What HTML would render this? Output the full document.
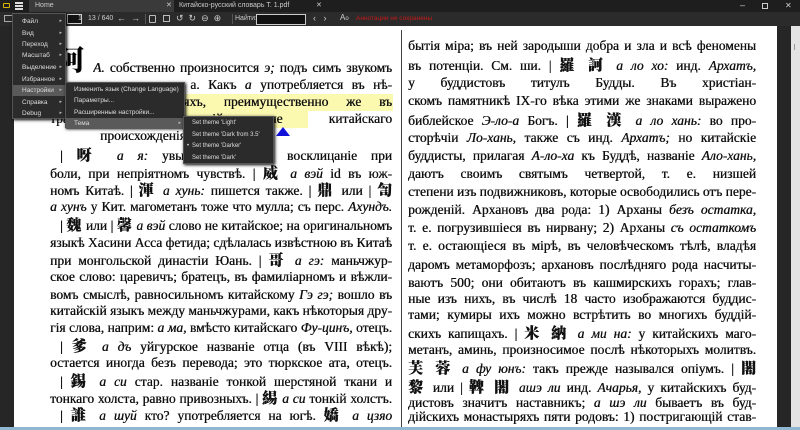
<!DOCTYPE html>
<html><head><meta charset="utf-8"><style>
*{margin:0;padding:0;box-sizing:border-box}
body{width:800px;height:430px;overflow:hidden;background:#262626;position:relative;font-family:"Liberation Sans",sans-serif}
.a{position:absolute}
#tabs{left:0;top:0;width:800px;height:12px;background:#1e1e1e}
#tb{left:0;top:12px;width:800px;height:14px;background:#2b2b2b}
.ui{color:#ccc;font-size:7px;line-height:10px;white-space:nowrap}
#page{left:14px;top:26px;width:763px;height:401px;background:#fff}
.l{position:absolute;font-family:"Liberation Serif","Noto Serif CJK SC",serif;font-size:13.5px;line-height:18px;height:18px;color:#111;text-shadow:0.35px 0 0 #111;text-align:justify;text-align-last:justify;overflow:hidden;white-space:normal;word-spacing:-1px}
.L{left:50px;width:342px}
.R{left:408px;width:348px}
.n{text-align-last:left}
i{font-style:italic}
.c{font-family:"Noto Serif CJK SC",serif;font-weight:900;font-size:15px}
.menu{background:#2b2b2b;border:1px solid #555;box-shadow:1px 1px 3px #000}
.mi{position:absolute;left:0;right:0;height:11px;color:#ddd;font-size:6.5px;line-height:11px;padding-left:9px;white-space:nowrap}
.mi.h{background:#5a5a5a}
.ar{position:absolute;right:3px;top:0;font-size:5px;color:#bbb}
</style></head><body>
<div class="a" id="tabs"></div>
<div class="a" style="left:3px;top:3px;width:7px;height:5px;border:1px solid #d8b400;border-radius:1px"></div>
<div class="a" style="left:15px;top:2px;width:8px;height:8px;border-top:2px solid #ddd;border-bottom:2px solid #ddd"></div>
<div class="a" style="left:15px;top:5px;width:8px;height:2px;background:#ddd"></div>
<div class="a" style="left:29px;top:0;width:145px;height:12px;background:#3a3a3a"></div>
<div class="a ui" style="left:35px;top:1px">Home</div>
<div class="a ui" style="left:166px;top:1px">✕</div>
<div class="a ui" style="left:179px;top:1px">Китайско-русский словарь Т. 1.pdf</div>
<div class="a ui" style="left:316px;top:1px">✕</div>
<div class="a ui" style="left:740px;top:0px;font-size:9px">–</div>
<div class="a" style="left:762px;top:3px;width:6px;height:6px;border:1px solid #ccc"></div>
<div class="a ui" style="left:785px;top:1px;font-size:8px">✕</div>
<div class="a" id="tb"></div>
<div class="a" style="left:4px;top:15px;width:9px;height:7px;border:1px solid #aaa"></div>
<div class="a" style="left:67px;top:14px;width:15px;height:10px;border:1px solid #ccc;background:#111"></div>
<div class="a ui" style="left:78px;top:14px">1</div>
<div class="a ui" style="left:88px;top:14px">13 / 640</div>
<div class="a ui" style="left:117px;top:13px;font-size:9px">← &nbsp;→</div>
<div class="a" style="left:145px;top:14px;width:1px;height:10px;background:#555"></div>
<div class="a" style="left:149px;top:15px;width:7px;height:8px;border:1px solid #bbb;border-radius:1px"></div>
<div class="a" style="left:163px;top:15px;width:7px;height:7px;border:1px solid #bbb"></div>
<div class="a ui" style="left:176px;top:13px;font-size:9px">↺ &nbsp;↻ &nbsp;⊖ &nbsp;⊕</div>
<div class="a" style="left:232px;top:14px;width:1px;height:10px;background:#555"></div>
<div class="a ui" style="left:235px;top:14px">Найти:</div>
<div class="a" style="left:256px;top:14px;width:50px;height:11px;border:1px solid #ccc;background:#111"></div>
<div class="a ui" style="left:313px;top:13px;font-size:9px">‹ &nbsp;&nbsp;›</div>
<div class="a ui" style="left:340px;top:13px;font-size:8px">A<span style="font-size:6px">o</span></div>
<div class="a ui" style="left:356px;top:14px;color:#c41a1a;font-size:6.5px">Аннотации не сохранены</div>
<div class="a" style="left:791px;top:26px;width:9px;height:401px;background:#e3e3e3"></div>
<div class="a" style="left:794px;top:44px;width:1px;height:6px;background:#999"></div>
<div class="a" style="left:0;top:427px;width:800px;height:3px;background:#8fb8d0"></div>
<div class="a" id="page"></div>
<div class="a" style="left:401px;top:30px;width:1px;height:397px;background:#444"></div>
<div class="a" style="left:165px;top:94px;width:228px;height:17px;background:#fbf8b0"></div>
<div class="a" style="left:160px;top:111px;width:148px;height:17px;background:#fbf8b0"></div>
<div class="a" style="left:276px;top:127px;width:0;height:0;border-left:7px solid transparent;border-right:7px solid transparent;border-bottom:9px solid #1010d8"></div>
<div class="a c" style="left:56px;top:42px;font-size:28px;line-height:34px">阿</div>

<div class="l L" style="left:93px;width:299px;top:59px"><i>А.</i> собственно произносится <i>э;</i> подъ симъ звукомъ</div>
<div class="l L" style="top:76px">ія произносится какъ а. Какъ <i>а</i> употребляется въ нѣ-</div>
<div class="l L" style="top:93px">которыхъ междометіяхъ, преимущественно же въ</div>
<div class="l L" style="top:110px">транскрипціи названій не китайскаго</div>
<div class="l L n" style="left:100px;top:127px">происхожденія.</div>
<div class="l L" style="left:60px;width:332px;top:146px">| <span class="c">呀</span> <i>а я:</i> увы, ахъ, <i>a io:</i> восклицаніе при</div>
<div class="l L" style="top:164px">боли, при непріятномъ чувствѣ. | <span class="c">威</span> <i>а вэй</i> id въ юж-</div>
<div class="l L" style="top:181px">номъ Китаѣ. | <span class="c">渾</span> <i>а хунь:</i> пишется также. | <span class="c">鼎</span> или | <span class="c">訇</span></div>
<div class="l L" style="top:198px"><i>а хунъ</i> у Кит. магометанъ тоже что мулла; съ перс. <i>Ахундъ.</i></div>
<div class="l L" style="left:60px;width:332px;top:216px">| <span class="c">魏</span> или | <span class="c">馨</span> <i>а вэй</i> слово не китайское; на оригинальномъ</div>
<div class="l L" style="top:234px">языкѣ Хасини Асса фетида; сдѣлалась извѣстною въ Китаѣ</div>
<div class="l L" style="top:251px">при монгольской династіи Юань. | <span class="c">哥</span> <i>а гэ:</i> маньчжур-</div>
<div class="l L" style="top:268px">ское слово: царевичъ; братецъ, въ фамиліарномъ и вѣжли-</div>
<div class="l L" style="top:286px">вомъ смыслѣ, равносильномъ китайскому <i>Гэ гэ;</i> вошло въ</div>
<div class="l L" style="top:302px">китайскій языкъ между маньчжурами, какъ нѣкоторыя дру-</div>
<div class="l L" style="top:319px">гія слова, наприм: <i>а ма,</i> вмѣсто китайскаго <i>Фу-цинъ,</i> отецъ.</div>
<div class="l L" style="left:60px;width:332px;top:337px">| <span class="c">爹</span> <i>а дъ</i> уйгурское названіе отца (въ VIII вѣкѣ);</div>
<div class="l L" style="top:354px">остается иногда безъ перевода; это тюркское ата, отецъ.</div>
<div class="l L" style="left:60px;width:332px;top:372px">| <span class="c">錫</span> <i>а си</i> стар. названіе тонкой шерстяной ткани и</div>
<div class="l L" style="top:389px">тонкаго холста, равно привозныхъ. | <span class="c">緆</span> <i>а си</i> тонкій холстъ.</div>
<div class="l L" style="left:60px;width:332px;top:406px">| <span class="c">誰</span> <i>а шуй</i> кто? употребляется на югѣ. <span class="c">嬌</span> <i>а цзяо</i></div>

<div class="l R" style="top:37px">бытія міра; въ ней зародыши добра и зла и всѣ феномены</div>
<div class="l R" style="top:56px">въ потенціи. См. ши. | <span class="c">羅 訶</span> <i>а ло хо:</i> инд. <i>Архатъ,</i></div>
<div class="l R" style="top:74px">у буддистовъ титулъ Будды. Въ христіан-</div>
<div class="l R" style="top:92px">скомъ памятникѣ IX-го вѣка этими же знаками выражено</div>
<div class="l R" style="top:111px">библейское <i>Э-ло-а</i> Богъ. | <span class="c">羅 漢</span> <i>а ло хань:</i> во про-</div>
<div class="l R" style="top:129px">сторѣчіи <i>Ло-хань,</i> также съ инд. <i>Архатъ;</i> но китайскіе</div>
<div class="l R" style="top:147px">буддисты, прилагая <i>А-ло-ха</i> къ Буддѣ, названіе <i>Ало-хань,</i></div>
<div class="l R" style="top:165px">даютъ своимъ святымъ четвертой, т. е. низшей</div>
<div class="l R" style="top:183px">степени изъ подвижниковъ, которые освободились отъ пере-</div>
<div class="l R" style="top:201px">рожденій. Архановъ два рода: 1) Арханы <i>безъ остатка,</i></div>
<div class="l R" style="top:219px">т. е. погрузившіеся въ нирвану; 2) Арханы <i>съ остаткомъ</i></div>
<div class="l R" style="top:237px">т. е. остающіеся въ мірѣ, въ человѣческомъ тѣлѣ, владѣя</div>
<div class="l R" style="top:256px">даромъ метаморфозъ; архановъ послѣдняго рода насчиты-</div>
<div class="l R" style="top:274px">ваютъ 500; они обитаютъ въ кашмирскихъ горахъ; глав-</div>
<div class="l R" style="top:290px">ные изъ нихъ, въ числѣ 18 часто изображаются буддис-</div>
<div class="l R" style="top:306px">тами; кумиры ихъ можно встрѣтить во многихъ буддій-</div>
<div class="l R" style="top:324px">скихъ капищахъ. | <span class="c">米 納</span> <i>а ми на:</i> у китайскихъ маго-</div>
<div class="l R" style="top:341px">метанъ, аминь, произносимое послѣ нѣкоторыхъ молитвъ.</div>
<div class="l R" style="top:359px"><span class="c">芙 蓉</span> <i>а фу юнъ:</i> такъ прежде назывался опіумъ. | <span class="c">闍</span></div>
<div class="l R" style="top:378px"><span class="c">黎</span> или | <span class="c">鞞 闍</span> <i>ашэ ли</i> инд. <i>Ачарья,</i> у китайскихъ буд-</div>
<div class="l R" style="top:394px">дистовъ значитъ наставникъ; <i>а шэ ли</i> бываетъ въ буд-</div>
<div class="l R" style="top:408px;height:19px">дійскихъ монастыряхъ пяти родовъ: 1) постригающій став-</div>

<div class="a menu" style="left:12px;top:13px;width:54px;height:106px">
<div class="mi" style="top:2px">Файл<span class="ar">▸</span></div>
<div class="mi" style="top:14px">Вид<span class="ar">▸</span></div>
<div class="mi" style="top:25px">Переход<span class="ar">▸</span></div>
<div class="mi" style="top:36px">Масштаб<span class="ar">▸</span></div>
<div class="mi" style="top:48px">Выделение<span class="ar">▸</span></div>
<div class="mi" style="top:60px">Избранное<span class="ar">▸</span></div>
<div class="mi h" style="top:71px">Настройки<span class="ar">▸</span></div>
<div class="mi" style="top:83px">Справка<span class="ar">▸</span></div>
<div class="mi" style="top:94px">Debug<span class="ar">▸</span></div>
</div>
<div class="a menu" style="left:65px;top:82px;width:120px;height:46px">
<div class="mi" style="top:1px;padding-left:8px">Изменить язык (Change Language)</div>
<div class="mi" style="top:12px;padding-left:8px">Параметры...</div>
<div class="mi" style="top:24px;padding-left:8px">Расширенные настройки...</div>
<div class="mi h" style="top:35px;padding-left:8px">Тема<span class="ar">▸</span></div>
</div>
<div class="a menu" style="left:183px;top:116px;width:91px;height:48px">
<div class="mi" style="top:1px;padding-left:8px;font-size:6px">Set theme 'Light'</div>
<div class="mi" style="top:13px;padding-left:8px;font-size:6px">Set theme 'Dark from 3.5'</div>
<div class="mi" style="top:24px;padding-left:8px;font-size:6px"><span style="position:absolute;left:3px">•</span>Set theme 'Darker'</div>
<div class="mi" style="top:36px;padding-left:8px;font-size:6px">Set theme 'Dark'</div>
</div>
</body></html>
